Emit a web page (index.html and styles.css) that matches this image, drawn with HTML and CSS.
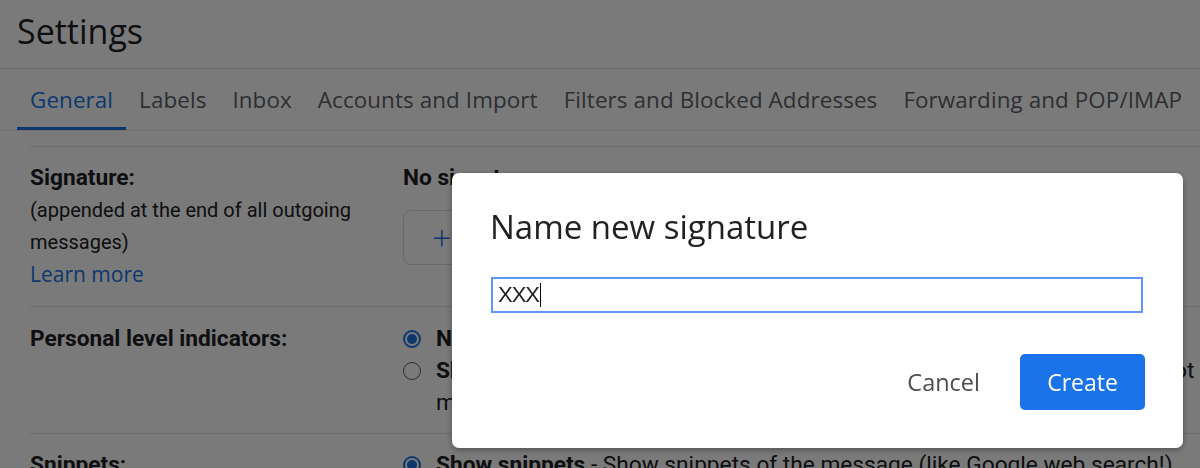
FILE: index.html
```html
<!DOCTYPE html>
<html lang="en">
<head>
<meta charset="utf-8">
<title>Settings</title>
<link rel="stylesheet" href="styles.css">
</head>
<body>
<div class="page">
  <header class="top">
    <h1 class="title">Settings</h1>
  </header>
  <nav class="tabs">
    <a class="tab active">General</a>
    <a class="tab">Labels</a>
    <a class="tab">Inbox</a>
    <a class="tab">Accounts and Import</a>
    <a class="tab">Filters and Blocked Addresses</a>
    <a class="tab">Forwarding and POP/IMAP</a>
  </nav>
  <section class="rows">
    <div class="row row-sig">
      <div class="label">
        <b class="strong">Signature:</b><br>
        <span class="note">(appended at the end of all outgoing messages)</span><br>
        <a class="link">Learn more</a>
      </div>
      <div class="value">
        <div class="strong">No signatures</div>
        <button class="newbtn"><span class="plus">+</span><span class="newtxt">Create new</span></button>
      </div>
    </div>
    <div class="row row-pli">
      <div class="label"><b class="strong">Personal level indicators:</b></div>
      <div class="value">
        <div class="opt"><span class="radio on"></span><span class="opt-text"><b class="strong">No indicators</b></span></div>
        <div class="opt"><span class="radio"></span><span class="opt-text"><span class="nowrap"><b class="strong">Show indicators</b> <span class="desc">- Display an arrow ( › ) by messages sent to my address (not a mailing list), and a double arrow ( » ) by</span></span><br>messages sent only to me.</span></div>
      </div>
    </div>
    <div class="row row-snip">
      <div class="label"><b class="strong">Snippets:</b></div>
      <div class="value">
        <div class="opt"><span class="radio on"></span><span class="opt-text"><b class="strong">Show snippets</b> - Show snippets of the message (like Google web search!)</span></div>
      </div>
    </div>
  </section>
</div>

<div class="scrim"></div>
<div class="dialog" role="dialog" aria-label="Name new signature">
  <h2 class="dialog-title">Name new signature</h2>
  <div class="field"><span class="typed">XXX</span><span class="caret"></span></div>
  <div class="actions">
    <button class="btn-text">Cancel</button>
    <button class="btn-primary">Create</button>
  </div>
</div>
</body>
</html>
```

FILE: styles.css
```css
html, body {
  margin: 0;
  padding: 0;
  height: 468px;
  overflow: hidden;
  background: #ffffff;
}

body {
  font-family: Roboto, "Liberation Sans", Arial, sans-serif;
  color: #202124;
}

.page {
  width: 1200px;
}

.top {
  height: 68px;
  border-bottom: 1px solid #d6d6d6;
  display: flex;
  align-items: center;
  padding-left: 17px;
}

.title {
  margin: 0;
  font-family: "Open Sans", Roboto, sans-serif;
  font-weight: 400;
  font-size: 34px;
  line-height: 40px;
  color: #202124;
  margin-top: -6px;
}

.tabs {
  height: 61px;
  border-bottom: 1px solid #ececec;
  display: flex;
  padding-left: 17px;
  white-space: nowrap;
}

.tab {
  display: flex;
  align-items: center;
  padding: 0 13px;
  font-family: "Open Sans", Roboto, sans-serif;
  font-size: 22.4px;
  letter-spacing: 0.1px;
  color: #5f6368;
}

.tab.active {
  color: #1a73e8;
  box-shadow: inset 0 -3px 0 #1a73e8;
}

.rows {
  margin-left: 30px;
  margin-top: 15px;
  border-top: 1px solid #e0e0e0;
}

.row {
  display: flex;
  border-bottom: 1px solid #e0e0e0;
  font-size: 22.7px;
  line-height: 32px;
}

.row-sig { padding: 15px 0; }
.row-pli { padding: 16px 0 14px; }
.row-snip { padding: 15px 0; }

.label {
  width: 373px;
  flex: none;
}

.note {
  font-size: 20px;
}

.strong {
  font-weight: 700;
}

.link {
  font-family: "Open Sans", Roboto, sans-serif;
  font-size: 21px;
  color: #1a73e8;
}

.value {
  flex: 1;
}

.newbtn {
  margin-top: 16px;
  height: 55px;
  padding: 0 24px 0 28px;
  border: 1px solid #dadce0;
  border-radius: 8px;
  background: #fff;
  display: flex;
  align-items: center;
  gap: 12px;
  font-family: "Open Sans", Roboto, sans-serif;
  font-size: 21px;
  color: #1a73e8;
}

.plus {
  font-size: 34px;
  font-weight: 300;
  line-height: 1;
}

.opt {
  display: flex;
  align-items: flex-start;
}

.radio {
  flex: none;
  width: 18px;
  height: 18px;
  box-sizing: border-box;
  border: 1.5px solid #5f6368;
  border-radius: 50%;
  margin: 7px 15px 0 0;
  position: relative;
}

.radio.on {
  border: 2px solid #1a73e8;
}

.radio.on::after {
  content: "";
  position: absolute;
  inset: 2px;
  border-radius: 50%;
  background: #1a73e8;
}

.nowrap {
  white-space: nowrap;
}

.desc {
  word-spacing: -0.9px;
}

.scrim {
  position: fixed;
  inset: 0;
  background: rgba(0, 0, 0, 0.52);
}

.dialog {
  position: fixed;
  left: 452px;
  top: 173px;
  width: 731px;
  height: 275px;
  box-sizing: border-box;
  padding: 34px 40px 38px 38px;
  background: #ffffff;
  border-radius: 7px;
  box-shadow: 0 2px 6px rgba(0, 0, 0, 0.35);
  display: flex;
  flex-direction: column;
}

.dialog-title {
  margin: 0;
  font-family: "Open Sans", Roboto, sans-serif;
  font-weight: 400;
  font-size: 33px;
  line-height: 40px;
  color: #202124;
}

.field {
  margin: 30px 0 0 1px;
  height: 36px;
  box-sizing: border-box;
  border: 2px solid #5e97f6;
  display: flex;
  align-items: center;
  padding-left: 5px;
  font-family: "Liberation Sans", Arial, sans-serif;
  font-size: 22px;
  color: #202124;
}

.typed {
  letter-spacing: -1px;
}

.caret {
  width: 1px;
  height: 24px;
  background: #000;
  margin-left: 1px;
}

.actions {
  margin-top: 41px;
  margin-right: -2px;
  display: flex;
  justify-content: flex-end;
  align-items: center;
}

.btn-text {
  height: 56px;
  padding: 0 40px 0 20px;
  border: 0;
  background: transparent;
  font-family: "Open Sans", Roboto, sans-serif;
  font-size: 23.5px;
  color: #4a4d51;
}

.btn-primary {
  width: 125px;
  height: 56px;
  border: 0;
  border-radius: 5px;
  background: #1a73e8;
  color: #ffffff;
  font-family: "Open Sans", Roboto, sans-serif;
  font-size: 23px;
}
```
